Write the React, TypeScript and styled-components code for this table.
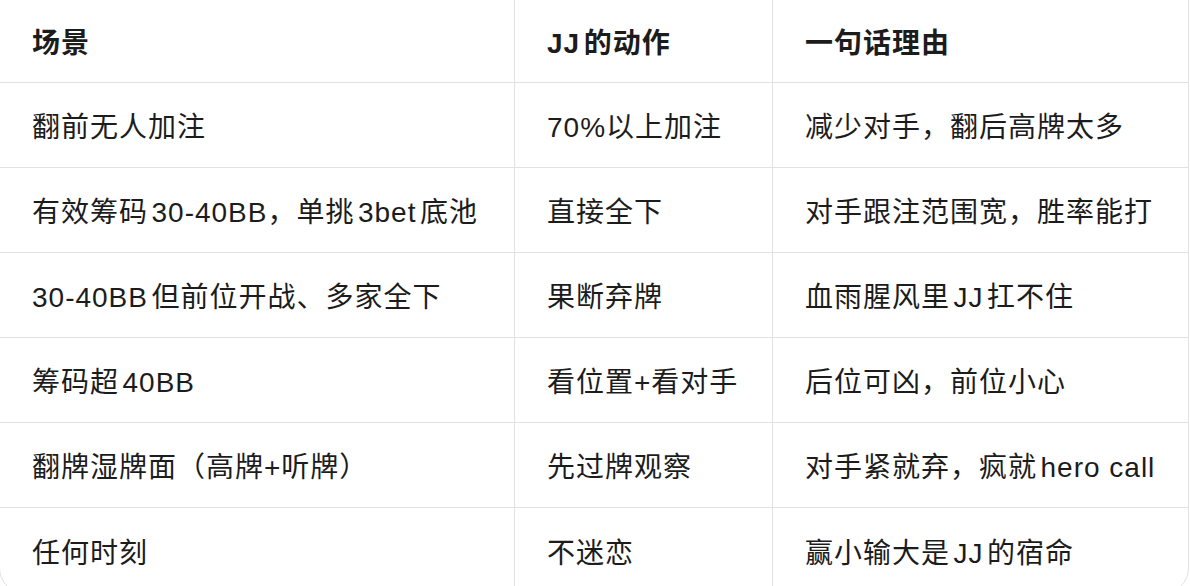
import styled, { createGlobalStyle } from 'styled-components';

const rows: [string, string, string][] = [
  ['翻前无人加注', '70%以上加注', '减少对手，翻后高牌太多'],
  ['有效筹码30-40BB，单挑3bet底池', '直接全下', '对手跟注范围宽，胜率能打'],
  ['30-40BB但前位开战、多家全下', '果断弃牌', '血雨腥风里JJ扛不住'],
  ['筹码超40BB', '看位置+看对手', '后位可凶，前位小心'],
  ['翻牌湿牌面（高牌+听牌）', '先过牌观察', '对手紧就弃，疯就hero call'],
  ['任何时刻', '不迷恋', '赢小输大是JJ的宿命'],
];

const GlobalStyle = createGlobalStyle`
  html, body {
    margin: 0;
    padding: 0;
    background: #ffffff;
    overflow: hidden;
  }
  body {
    font-family: "Liberation Sans", "Noto Sans CJK SC", sans-serif;
    color: #1c1c1c;
  }
`;

const Page = styled.div`
  width: 1190px;
  height: 586px;
  overflow: hidden;
`;

const Wrapper = styled.div`
  width: 1190px;
  margin: -1px 0 0 -1px;
  border: 1px solid #e2e2e2;
  border-radius: 0 0 26px 26px;
  overflow: hidden;
  box-sizing: border-box;
`;

const Grid = styled.div`
  display: grid;
  grid-template-columns: 515px 258px 415px;
`;

const Cell = styled.div<{ $head?: boolean; $last?: boolean; $bottom?: boolean }>`
  display: flex;
  align-items: center;
  box-sizing: border-box;
  height: ${(p) => (p.$head ? '83px' : '85px')};
  padding: 0 0 0 32px;
  font-size: 28px;
  letter-spacing: 1px;
  text-autospace: normal;
  font-weight: ${(p) => (p.$head ? 700 : 400)};
  white-space: nowrap;
  border-right: ${(p) => (p.$last ? 'none' : '1px solid #e2e2e2')};
  border-bottom: ${(p) => (p.$bottom ? 'none' : '1px solid #e2e2e2')};
`;

export default function App() {
  return (
    <Page>
      <GlobalStyle />
      <Wrapper>
        <Grid>
          <Cell $head>场景</Cell>
          <Cell $head>JJ的动作</Cell>
          <Cell $head $last>一句话理由</Cell>
          {rows.map((r, i) =>
            r.map((text, j) => (
              <Cell key={`${i}-${j}`} $last={j === 2} $bottom={i === rows.length - 1}>
                {text}
              </Cell>
            ))
          )}
        </Grid>
      </Wrapper>
    </Page>
  );
}
